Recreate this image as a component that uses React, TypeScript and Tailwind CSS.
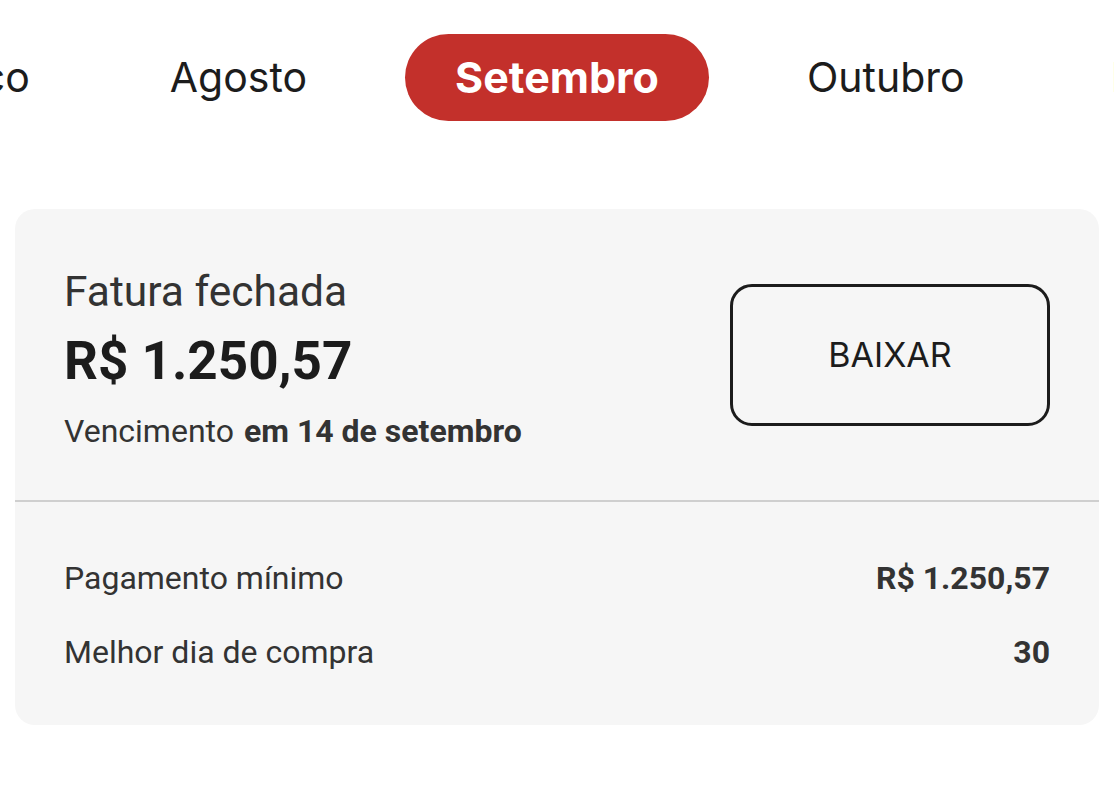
const tabs = ["Histórico", "Agosto", "Setembro", "Outubro", "Novembro"];
const selected = 2;

export default function App() {
  return (
    <div className="min-h-[796px] w-[1114px] overflow-hidden bg-white">
      <div className="flex pt-[34px]">
        <div className="flex flex-1 justify-end gap-[40px] overflow-hidden">
          {tabs.slice(0, selected).map((t) => (
            <Tab key={t} label={t} />
          ))}
        </div>
        <div className="mx-12">
          <Tab label={tabs[selected]} active />
        </div>
        <div className="flex flex-1 justify-start gap-[46px] overflow-hidden">
          {tabs.slice(selected + 1).map((t) => (
            <Tab key={t} label={t} />
          ))}
        </div>
      </div>

      <div className="mx-[15px] mt-[88px] rounded-[20px] bg-[#f6f6f6] font-['Roboto',sans-serif]">
        <div className="flex h-[293px] items-center justify-between border-b-2 border-[#cfcfcf] px-[49px]">
          <div className="flex flex-col pt-[8px]">
            <div className="text-[42.5px] leading-[50px] text-[#333333]">Fatura fechada</div>
            <div className="mt-[13px] text-[53px] font-bold leading-[62px] text-[#1c1c1c]">
              R$ 1.250,57
            </div>
            <div className="mt-[19px] flex items-baseline gap-[10px] text-[32px] leading-[40px] text-[#333333]">
              <span>Vencimento</span>
              <span className="font-bold">em 14 de setembro</span>
            </div>
          </div>
          <button className="flex h-[142px] w-[320px] items-center justify-center rounded-[22px] border-[3px] border-[#1c1c1c] font-['Inter',sans-serif] text-[34px] text-[#1c1c1c]">
            BAIXAR
          </button>
        </div>
        <div className="flex flex-col gap-[38px] px-[49px] pb-[55px] pt-[58px] text-[32px] leading-[36px] text-[#333333]">
          <div className="flex items-center justify-between">
            <span>Pagamento mínimo</span>
            <span className="font-bold">R$ 1.250,57</span>
          </div>
          <div className="flex items-center justify-between">
            <span>Melhor dia de compra</span>
            <span className="font-bold">30</span>
          </div>
        </div>
      </div>
    </div>
  );
}

function Tab({ label, active }: { label: string; active?: boolean }) {
  return (
    <div
      className={`flex h-[87px] shrink-0 items-center whitespace-nowrap rounded-full px-[50px] font-['Inter',sans-serif] ${
        active ? "bg-[#c3302b] text-[43px] font-bold text-white" : "text-[41px] text-[#1c1c1c]"
      }`}
    >
      {label}
    </div>
  );
}
